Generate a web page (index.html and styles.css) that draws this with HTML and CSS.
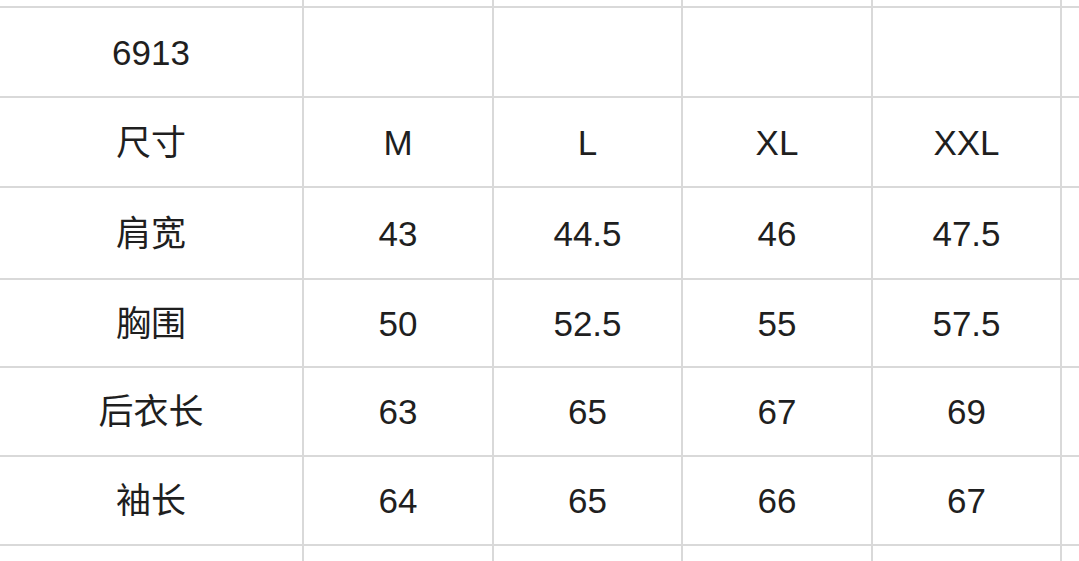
FILE: index.html
```html
<!DOCTYPE html>
<html lang="zh">
<head>
<meta charset="utf-8">
<link rel="stylesheet" href="styles.css">
</head>
<body>
<div class="sheet">
  <div class="c"></div><div class="c"></div><div class="c"></div><div class="c"></div><div class="c"></div><div class="c"></div>
  <div class="c">6913</div><div class="c"></div><div class="c"></div><div class="c"></div><div class="c"></div><div class="c"></div>
  <div class="c">尺寸</div><div class="c">M</div><div class="c">L</div><div class="c">XL</div><div class="c">XXL</div><div class="c"></div>
  <div class="c">肩宽</div><div class="c">43</div><div class="c">44.5</div><div class="c">46</div><div class="c">47.5</div><div class="c"></div>
  <div class="c">胸围</div><div class="c">50</div><div class="c">52.5</div><div class="c">55</div><div class="c">57.5</div><div class="c"></div>
  <div class="c">后衣长</div><div class="c">63</div><div class="c">65</div><div class="c">67</div><div class="c">69</div><div class="c"></div>
  <div class="c">袖长</div><div class="c">64</div><div class="c">65</div><div class="c">66</div><div class="c">67</div><div class="c"></div>
  <div class="c"></div><div class="c"></div><div class="c"></div><div class="c"></div><div class="c"></div><div class="c"></div>
</div>
</body>
</html>
```

FILE: styles.css
```css
html, body {
  margin: 0;
  padding: 0;
  background: #ffffff;
}
body {
  width: 1079px;
  height: 561px;
  overflow: hidden;
}
.sheet {
  display: grid;
  width: 1079px;
  height: 561px;
  background: #d9d9d9;
  gap: 2px;
  grid-template-columns: 302px 188px 187px 188px 187px 1fr;
  grid-template-rows: 6px 88px 88px 90px 86px 87px 87px 1fr;
  overflow: hidden;
}
.c {
  background: #ffffff;
  display: flex;
  align-items: center;
  justify-content: center;
  font-family: "Liberation Sans", "Noto Sans CJK SC", sans-serif;
  font-size: 35px;
  color: #1f1f1f;
  line-height: 1;
  overflow: hidden;
}
```
